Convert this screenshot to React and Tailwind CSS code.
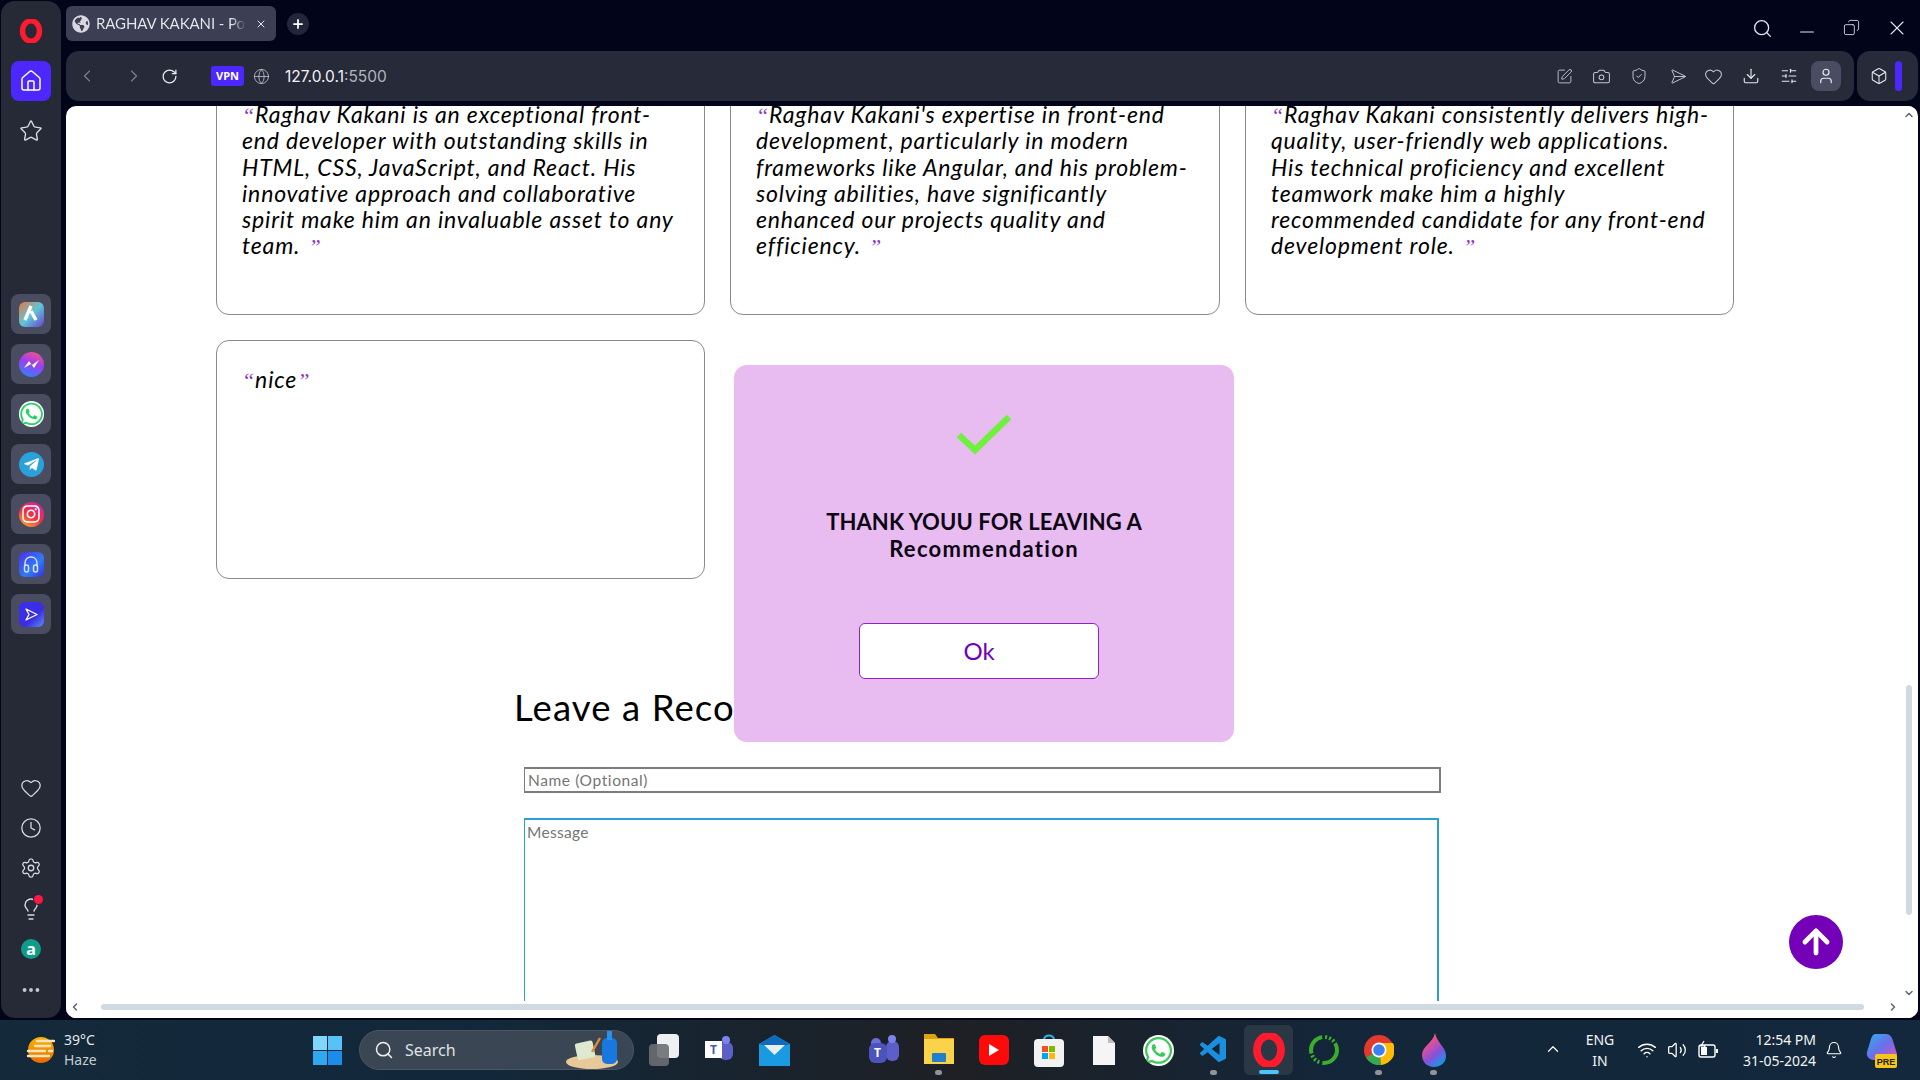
import React from "react";
import {
  ChevronLeft, ChevronRight, RotateCw, Globe, Search, Minus, Copy, X, Camera, ShieldCheck, Heart, Download,
  SlidersHorizontal, User, Box, Plus, Home, Star, Clock, Settings, Lightbulb, MoreHorizontal, ArrowUp,
  ChevronUp, ChevronDown, Wifi, Volume2, Bell, SquarePen, Send,
} from "lucide-react";
import { FaWhatsapp, FaTelegramPlane, FaInstagram, FaGlobeAmericas } from "react-icons/fa";
import { VscVscode } from "react-icons/vsc";

const cards = [
  ["Raghav Kakani is an exceptional front-", "end developer with outstanding skills in", "HTML, CSS, JavaScript, and React. His", "innovative approach and collaborative", "spirit make him an invaluable asset to any", "team."],
  ["Raghav Kakani's expertise in front-end", "development, particularly in modern", "frameworks like Angular, and his problem-", "solving abilities, have significantly", "enhanced our projects quality and", "efficiency."],
  ["Raghav Kakani consistently delivers high-", "quality, user-friendly web applications.", "His technical proficiency and excellent", "teamwork make him a highly", "recommended candidate for any front-end", "development role."],
];

function Q({ c }) {
  return <span className="font-['Liberation_Serif',serif] text-[#8a35c8] text-[22px] leading-none">{c}</span>;
}

function Card({ lines }) {
  return (
    <div className="h-[239px] border border-[#8a8a8a] rounded-[13px] bg-white pl-[25px] pt-[24px] italic text-[23px] leading-[26.3px] text-black font-['Lato',sans-serif] tracking-[0.83px]">
      {lines.map((l, i) => (
        <div key={i} className="whitespace-nowrap">
          {i === 0 && <Q c="“" />}
          {l}
          {i === lines.length - 1 && <> <span className="ml-[2px]" /><Q c="”" /></>}
        </div>
      ))}
    </div>
  );
}

function Tile({ children, cls }) {
  return (
    <div className="w-10 h-10 rounded-lg bg-[#4a4c60] flex items-center justify-center">
      <div className={"w-[25px] h-[25px] flex items-center justify-center text-white " + cls}>{children}</div>
    </div>
  );
}

function OperaLogo({ size = 22 }) {
  return (
    <svg width={size} height={size} viewBox="0 0 24 24">
      <ellipse cx="12" cy="12" rx="8.5" ry="10.2" fill="none" stroke="#ff1b2d" strokeWidth="5.4" />
    </svg>
  );
}

function Slot({ children, dot, active }) {
  return (
    <div className="w-[55px] h-[60px] relative flex items-center justify-center">
      {active && <div className="absolute left-[3px] top-[5px] w-[49px] h-[50px] rounded-md bg-[#2a3846]" />}
      <div className="relative">{children}</div>
      {dot && <div className="absolute left-[24px] top-[50px] w-[7px] h-[5px] rounded-full bg-[#8f949a]" />}
      {active && <div className="absolute left-[18px] top-[50px] w-[20px] h-[4px] rounded-full bg-[#4cc2ff]" />}
    </div>
  );
}

export default function App() {
  return (
    <div className="w-[1920px] h-[1080px] overflow-hidden flex flex-col bg-[#02041a] font-['Noto_Sans',sans-serif]">
      <div className="h-[1020px] flex shrink-0">
        {/* sidebar */}
        <aside className="w-[60px] ml-px mt-px h-[1017px] bg-[#262936] rounded-[14px] flex flex-col items-center shrink-0">
          <div className="mt-[18px] h-[24px]"><OperaLogo size={24} /></div>
          <div className="mt-[18px] w-10 h-10 rounded-lg bg-[#4c28ff] flex items-center justify-center"><Home size={24} strokeWidth={1.5} color="#fff" /></div>
          <div className="mt-[18px]"><Star size={24} strokeWidth={1.4} color="#d8dae2" /></div>
          <div className="mt-[151px] flex flex-col gap-[10px]">
            <Tile cls="rounded-md bg-[linear-gradient(135deg,#e8743c,#5fc8d8_50%,#6a3fd0)]">
              <svg width="18" height="18" viewBox="0 0 18 18"><path d="M9 1 L3 15 M9 6 L14 15" stroke="#fff" strokeWidth="3.4" fill="none" /></svg>
            </Tile>
            <Tile cls="rounded-full bg-[linear-gradient(200deg,#ff5a7a,#a03df0_45%,#1e8cff)]">
              <svg width="17" height="12" viewBox="0 0 17 12"><path d="M1 10 L6 3 L9 7 L16 2 L11 10 L8 6 Z" fill="#fff" /></svg>
            </Tile>
            <Tile cls=""><FaWhatsapp size={26} color="#25d366" className="bg-white rounded-full" /></Tile>
            <Tile cls="rounded-full bg-[#2aa1da]"><FaTelegramPlane size={17} color="#fff" /></Tile>
            <Tile cls="rounded-full bg-[linear-gradient(30deg,#fdc02f,#f5303f_45%,#c225b8)]"><FaInstagram size={20} color="#fff" /></Tile>
            <Tile cls="rounded-md bg-[linear-gradient(135deg,#4a2ef0,#2f7cf8_60%,#3a2de0)]">
              <svg width="16" height="18" viewBox="0 0 16 18" fill="none" stroke="#dfe4ff" strokeWidth="1.4"><path d="M2 11 V8 C2 0 14 0 14 8 V11" /><rect x="1.5" y="10" width="4" height="7" rx="2" /><rect x="10.5" y="10" width="4" height="7" rx="2" /></svg>
            </Tile>
            <Tile cls="rounded-md bg-[linear-gradient(135deg,#3a2ef0,#3a2de0_60%,#5f8cf8)]">
              <svg width="15" height="15" viewBox="0 0 15 15"><path d="M2 2 L13 7.5 L2 13 L5 7.5 Z" fill="none" stroke="#fff" strokeWidth="1.3" strokeLinejoin="round" /></svg>
            </Tile>
          </div>
          <div className="mt-auto mb-[17px] flex flex-col items-center">
            <Heart size={22} strokeWidth={1.4} color="#d8dae2" />
            <div className="mt-[18px]"><Clock size={22} strokeWidth={1.4} color="#d8dae2" /></div>
            <div className="mt-[18px]"><Settings size={22} strokeWidth={1.4} color="#d8dae2" /></div>
            <div className="mt-[18px] relative">
              <Lightbulb size={24} strokeWidth={1.4} color="#d8dae2" />
              <div className="absolute -top-[2px] left-[15px] w-[9px] h-[9px] rounded-full bg-[#ff1745] ring-1 ring-[#262936]" />
            </div>
            <div className="mt-[18px] w-5 h-5 rounded-full bg-[#0f9d8a] flex items-center justify-center text-white text-[16px] font-bold leading-none">a</div>
            <div className="mt-[20px]"><MoreHorizontal size={22} strokeWidth={2.2} color="#c4c6ce" /></div>
          </div>
        </aside>

        <div className="ml-[5px] flex-1 min-w-0 flex flex-col">
          {/* tab strip */}
          <div className="h-[51px] shrink-0 flex items-start">
            <div className="mt-[6px] w-[210px] h-[35px] rounded-md bg-[#3c3e53] flex items-center text-[#e8e9ee] pl-[6px] pr-[9px]">
              <FaGlobeAmericas size={18} color="#d7d8df" />
              <span className="ml-[6px] w-[150px] overflow-hidden whitespace-nowrap text-[15px] tracking-[-0.1px] font-['Lato',sans-serif] bg-[linear-gradient(90deg,#e8e9ee_90%,#3c3e53)] bg-clip-text text-transparent">RAGHAV KAKANI - Por</span>
              <X size={12} strokeWidth={2} className="ml-auto" />
            </div>
            <div className="mt-[13px] ml-[11px] w-[22px] h-[22px] rounded-full bg-[#23263a] flex items-center justify-center"><Plus size={14} strokeWidth={3} color="#fff" /></div>
            <div className="ml-auto flex items-center text-[#e4e5ea] mt-[13px]">
              <Search size={21} strokeWidth={1.5} className="mr-[1px]" />
              <Minus size={22} strokeWidth={1.1} className="ml-[22px] mt-2" />
              <Copy size={17} strokeWidth={1.2} className="ml-[25px] -scale-x-100 -mt-[1px]" />
              <X size={24} strokeWidth={1.1} className="ml-[25px] mr-[11px]" />
            </div>
          </div>
          {/* address row */}
          <div className="h-[50px] shrink-0 flex">
            <div className="w-[1788px] bg-[#272a38] rounded-[13px] flex items-center relative">
              <ChevronLeft size={20} strokeWidth={1.4} color="#7d8090" className="ml-[11px]" />
              <ChevronRight size={20} strokeWidth={1.4} color="#7d8090" className="ml-[27px]" />
              <RotateCw size={17} strokeWidth={1.8} color="#e8e9ee" className="ml-[17px]" />
              <div className="ml-[33px] w-[33px] h-5 rounded-[3px] bg-[#4c28ff] text-white text-[11px] font-bold flex items-center justify-center">VPN</div>
              <Globe size={17} strokeWidth={1.1} color="#c9cad2" className="ml-[9px]" />
              <span className="ml-[15px] mt-[1px] text-[15.5px] text-[#f2f2f5] font-['Inter',sans-serif]">127.0.0.1<span className="text-[#b2b4be]">:5500</span></span>
              <div className="ml-auto flex items-center text-[#c4c6ce]">
                <SquarePen size={17} strokeWidth={1.3} />
                <Camera size={19} strokeWidth={1.3} className="ml-[19px]" />
                <ShieldCheck size={18} strokeWidth={1.3} className="ml-[19px]" />
                <Send size={17} strokeWidth={1.3} className="ml-[19px] rotate-45" />
                <Heart size={19} strokeWidth={1.3} className="ml-[20px]" />
                <Download size={18} strokeWidth={1.5} className="ml-[19px]" color="#e8e9ee" />
                <SlidersHorizontal size={18} strokeWidth={1.5} className="ml-[20px]" color="#e8e9ee" />
                <div className="ml-[13px] mr-[13px] w-[30px] h-[30px] rounded-lg bg-[#4a4c62] flex items-center justify-center"><User size={18} strokeWidth={1.6} color="#e8e9ee" /></div>
              </div>
            </div>
            <div className="ml-[3px] w-[61px] bg-[#272a38] rounded-[13px] flex items-center">
              <Box size={18} strokeWidth={1.4} color="#e8e9ee" className="ml-[13px]" />
              <div className="ml-[7px] w-[7px] h-[30px] rounded bg-[#4c28ff]" />
            </div>
          </div>
          {/* page */}
          <main className="mt-[5px] h-[912px] w-[1852px] bg-white rounded-[10px] overflow-hidden relative flex flex-col">
            <div className="flex-1 min-h-0 flex">
              <div className="flex-1 min-w-0 overflow-hidden">
                <div className="-mt-[30px] pl-[150px] w-[1668px]">
                  <div className="grid grid-cols-[489px_490px_489px] gap-x-[25px] gap-y-[25px]">
                    {cards.map((c, i) => <Card key={i} lines={c} />)}
                    <div className="h-[239px] border border-[#8a8a8a] rounded-[13px] bg-white pl-[25px] pt-[25px] italic text-[23px] leading-[26px] tracking-[0.85px] font-['Lato',sans-serif]"><Q c="“" />nice<Q c="”" /></div>
                  </div>
                </div>
                <div className="pl-[448px] mt-[106px] text-[36.5px] leading-[44px] tracking-[1.1px] text-black font-['Lato',sans-serif] whitespace-nowrap">Leave a Recommendation</div>
                <div className="ml-[458px] mt-[38px] w-[917px] h-[26px] border-2 border-[#7c7c7c] border-l-[1.5px] bg-white px-[3px] text-[15.5px] leading-[22px] text-[#757575] font-['Lato',sans-serif] tracking-[0.6px]">Name (Optional)</div>
                <div className="ml-[458px] mt-[25px] w-[915px] h-[240px] border border-[#2a9fd8] border-r-2 border-t-2 bg-white px-[2px] pt-[2px] text-[15.5px] leading-[20px] text-[#757575] font-['Lato',sans-serif] tracking-[0.3px]">Message</div>
              </div>
              {/* v scroll */}
              <div className="w-[17px] shrink-0 bg-white flex flex-col items-center mr-[1px]">
                <ChevronUp size={12} strokeWidth={3} color="#666" className="mt-[3px]" />
                <div className="mt-[564px] w-[6px] h-[230px] rounded-full bg-[#d0dae3]" />
                <ChevronDown size={12} strokeWidth={3} color="#666" className="mt-auto mb-[2px]" />
              </div>
            </div>
            {/* h scroll */}
            <div className="h-[17px] shrink-0 bg-white flex items-center pb-[5px]">
              <ChevronLeft size={12} strokeWidth={3} color="#666" className="ml-[3px]" />
              <div className="ml-[20px] w-[1763px] h-[6px] rounded-full bg-[#d0dae3]" />
              <ChevronRight size={12} strokeWidth={3} color="#666" className="ml-[23px]" />
            </div>

            {/* modal */}
            <div className="absolute left-[668px] top-[259px] w-[500px] h-[377px] rounded-[13px] bg-[#e8bcf0] flex flex-col items-center">
              <svg width="56" height="42" viewBox="0 0 56 42" className="mt-[49px]">
                <path d="M3 21 L19 36 L53 3" fill="none" stroke="#6ef03c" strokeWidth="6.5" />
              </svg>
              <div className="mt-[52px] w-[400px] text-center text-[22px] leading-[27px] font-bold text-[#0c0614] font-['Lato',sans-serif]">
                <div className="tracking-[0.1px]">THANK YOUU FOR LEAVING A</div>
                <div className="tracking-[1.3px]">Recommendation</div>
              </div>
              <div className="mt-[61px] -ml-[10px] w-[240px] h-[56px] rounded-[6px] bg-white border-[1.5px] border-[#8f22cc] flex items-center justify-center text-[24px] text-[#7000c0] font-['Lato',sans-serif]">Ok</div>
            </div>
            {/* scroll top */}
            <div className="absolute left-[1723px] top-[809px] w-[54px] h-[54px] rounded-full bg-[#7400b8] flex items-center justify-center"><ArrowUp size={38} strokeWidth={3} color="#fff" /></div>
          </main>
        </div>
      </div>

      {/* taskbar */}
      <footer className="h-[60px] shrink-0 flex items-center bg-[linear-gradient(90deg,#14293a_0%,#12283a_25%,#1e2024_50%,#13263a_70%,#13283c_100%)] text-white relative">
        <svg width="30" height="30" viewBox="0 0 30 30" className="ml-[25px] shrink-0">
          <defs><linearGradient id="sun" x1="0" y1="0" x2="0" y2="1"><stop offset="0" stopColor="#ffb400" /><stop offset="1" stopColor="#e86a00" /></linearGradient></defs>
          <circle cx="16" cy="15" r="13" fill="url(#sun)" />
          <path d="M12 6 H29 M10 11 H25 M3 16 H20 M24 16 H27 M3 21 H24" stroke="#f5e6c0" strokeWidth="2.4" strokeLinecap="round" />
        </svg>
        <div className="ml-[9px] w-[40px] shrink-0 text-[14px] leading-[20px] text-[#e6e8ea]"><div>39°C</div><div className="text-[#c4ccd2]">Haze</div></div>
        <svg width="29" height="29" viewBox="0 0 29 29" className="ml-[209px] shrink-0">
          <rect x="0" y="0" width="14" height="14" fill="#7fd6fa" /><rect x="15" y="0" width="14" height="14" fill="#58c2f6" />
          <rect x="0" y="15" width="14" height="14" fill="#2fa8f0" /><rect x="15" y="15" width="14" height="14" fill="#1a8cea" />
        </svg>
        <div className="ml-[17px] w-[275px] h-[40px] rounded-full bg-[#3a4654] border border-[#4b5662] flex items-center pl-[14px] text-[16px] text-[#dfe3e6] shrink-0 relative">
          <Search size={20} strokeWidth={1.8} color="#eef0f2" />
          <span className="ml-[11px]">Search</span>
          <svg width="62" height="40" viewBox="0 0 62 40" className="ml-auto mr-[5px]">
            <ellipse cx="26" cy="32" rx="26" ry="7" fill="#e8c99a" />
            <rect x="10" y="12" width="18" height="17" rx="2" fill="#dfe8d0" transform="rotate(-12 18 20)" />
            <path d="M26 22 L34 8" stroke="#e88a30" strokeWidth="2.4" />
            <rect x="36" y="8" width="15" height="26" rx="5" fill="#1878e0" /><rect x="41" y="1" width="5" height="9" fill="#2a90f0" />
          </svg>
        </div>
        <div className="ml-[15px] w-[30px] h-[32px] relative shrink-0">
          <div className="absolute right-0 top-0 w-[22px] h-[24px] rounded-sm bg-[#eef0f2]" />
          <div className="absolute left-0 bottom-0 w-[20px] h-[22px] rounded-sm bg-[#6b6f73]/90" />
        </div>
        <div className="ml-[26px] w-[28px] flex items-center justify-center shrink-0 relative h-[28px]">
          <div className="absolute right-0 top-[6px] w-[14px] h-[18px] rounded-md bg-[#5b5fc7]" />
          <div className="absolute right-[3px] top-0 w-[8px] h-[8px] rounded-full bg-[#7b83eb]" />
          <div className="absolute left-0 top-[5px] w-[17px] h-[17px] bg-white text-[#4b53bc] text-[12px] font-bold flex items-center justify-center">T</div>
        </div>
        <svg width="31" height="31" viewBox="0 0 31 31" className="ml-[26px] shrink-0">
          <path d="M0 9 L15.5 0 L31 9 V31 H0 Z" fill="#1a9ae0" /><path d="M0 9 L15.5 0 L31 9 L15.5 14 Z" fill="#0f6cbd" />
          <path d="M5 10 H26 L15.5 20 Z" fill="#e8eef2" />
        </svg>
        <div className="ml-[66px] flex shrink-0">
          <Slot><div className="w-[30px] h-[30px] relative">
            <div className="absolute right-0 top-[6px] w-[13px] h-[20px] rounded-md bg-[#5b5fc7]" />
            <div className="absolute right-[3px] top-0 w-[8px] h-[8px] rounded-full bg-[#7b83eb]" />
            <div className="absolute left-[2px] top-[3px] w-[10px] h-[10px] rounded-full bg-[#6a70d8]" />
            <div className="absolute left-0 top-[8px] w-[18px] h-[20px] rounded-md bg-[#4b53bc] text-white text-[12px] font-bold flex items-center justify-center">T</div>
          </div></Slot>
          <Slot dot><svg width="30" height="32" viewBox="0 0 30 32"><path d="M0 0 H11 L14 4 H30 V10 H0 Z" fill="#d9a515" /><rect x="0" y="5" width="30" height="25" fill="#fbd34a" /><rect x="8" y="19" width="14" height="9" rx="1" fill="#1f7fd0" /></svg></Slot>
          <Slot><div className="w-[30px] h-[30px] rounded-md bg-[#ff0a0a] flex items-center justify-center"><svg width="10" height="12" viewBox="0 0 10 12"><path d="M0 0 L10 6 L0 12 Z" fill="#fff" /></svg></div></Slot>
          <Slot><svg width="30" height="33" viewBox="0 0 30 33"><path d="M10 6 C10 0 20 0 20 6" fill="none" stroke="#27b7e8" strokeWidth="2" /><rect x="0" y="5" width="30" height="28" rx="4" fill="#f2f2f2" /><rect x="8" y="12" width="6" height="6" fill="#f25022" /><rect x="15" y="12" width="6" height="6" fill="#7fba00" /><rect x="8" y="19" width="6" height="6" fill="#00a4ef" /><rect x="15" y="19" width="6" height="6" fill="#ffb900" /></svg></Slot>
          <Slot><svg width="22" height="29" viewBox="0 0 22 29"><path d="M0 0 H15 L22 7 V29 H0 Z" fill="#f5f5f5" /><path d="M15 0 L22 7 H15 Z" fill="#bdbdbd" /></svg></Slot>
          <Slot><FaWhatsapp size={31} color="#3ccb5a" className="bg-white rounded-full" /></Slot>
          <Slot dot><VscVscode size={32} color="#1a8fe0" /></Slot>
          <Slot active><OperaLogo size={34} /></Slot>
          <Slot><svg width="32" height="32" viewBox="0 0 32 32"><circle cx="16" cy="16" r="13" fill="none" stroke="#3cae2c" strokeWidth="4" strokeDasharray="22 3 2 2 2 2 2 2" /></svg></Slot>
          <Slot dot><svg width="30" height="30" viewBox="0 0 30 30">
            <circle cx="15" cy="15" r="15" fill="#e03a2f" />
            <path d="M15 15 L2 22.5 A15 15 0 0 0 17 30 Z" fill="#34a853" />
            <path d="M15 8 H29 A15 15 0 0 1 17 30 Z" fill="#fbbc05" />
            <circle cx="15" cy="15" r="7.5" fill="#fff" /><circle cx="15" cy="15" r="5.8" fill="#3b7ff0" />
          </svg></Slot>
          <Slot dot><svg width="24" height="34" viewBox="0 0 24 34"><defs><linearGradient id="fl" x1="0" y1="0" x2="0.6" y2="1"><stop offset="0" stopColor="#ffb020" /><stop offset="0.35" stopColor="#e85090" /><stop offset="0.7" stopColor="#8a50d8" /><stop offset="1" stopColor="#2090e8" /></linearGradient></defs><path d="M13 0 C15 10 24 14 24 23 C24 30 18 34 12 34 C5 34 0 29 0 22 C0 13 11 10 13 0 Z" fill="url(#fl)" /></svg></Slot>
        </div>
        <div className="absolute left-[1544px] top-[20px]"><ChevronUp size={18} strokeWidth={1.6} /></div>
        <div className="absolute left-[1582px] top-[9px] w-[36px] text-center text-[14px] leading-[21px] text-[#f2f4f6]">ENG<br />IN</div>
        <div className="absolute left-[1637px] top-[20px] flex items-center">
          <Wifi size={20} strokeWidth={1.7} />
          <Volume2 size={20} strokeWidth={1.5} className="ml-[10px]" />
          <svg width="22" height="20" viewBox="0 0 22 20" className="ml-[10px]"><rect x="2" y="5" width="16" height="12" rx="2" fill="none" stroke="#fff" strokeWidth="1.4" /><rect x="4" y="7" width="6" height="8" fill="#fff" /><rect x="19" y="9" width="2" height="4" fill="#fff" /><path d="M7 1 L4 6 H8 L6 10" fill="none" stroke="#fff" strokeWidth="1.2" /></svg>
        </div>
        <div className="absolute left-[1716px] top-[9px] w-[100px] text-right text-[14px] leading-[21px] text-[#f2f4f6]">12:54 PM<br />31-05-2024</div>
        <div className="absolute left-[1825px] top-[21px]"><Bell size={18} strokeWidth={1.5} /></div>
        <svg width="34" height="36" viewBox="0 0 34 36" className="absolute left-[1864px] top-[12px]">
          <defs><linearGradient id="cp" x1="0" y1="0" x2="1" y2="1"><stop offset="0" stopColor="#2bb0f0" /><stop offset="0.5" stopColor="#6a70e8" /><stop offset="1" stopColor="#e050c0" /></linearGradient></defs>
          <path d="M12 2 H22 C26 2 28 5 29 9 L33 22 C33 26 30 28 26 28 H10 C5 28 2 24 3 20 L7 7 C8 4 9 2 12 2 Z" fill="url(#cp)" />
          <rect x="11" y="22" width="22" height="14" rx="2" fill="#f5c518" />
          <text x="22" y="33" textAnchor="middle" fontSize="9" fontWeight="700" fill="#222" fontFamily="Liberation Sans, sans-serif">PRE</text>
        </svg>
      </footer>
    </div>
  );
}
